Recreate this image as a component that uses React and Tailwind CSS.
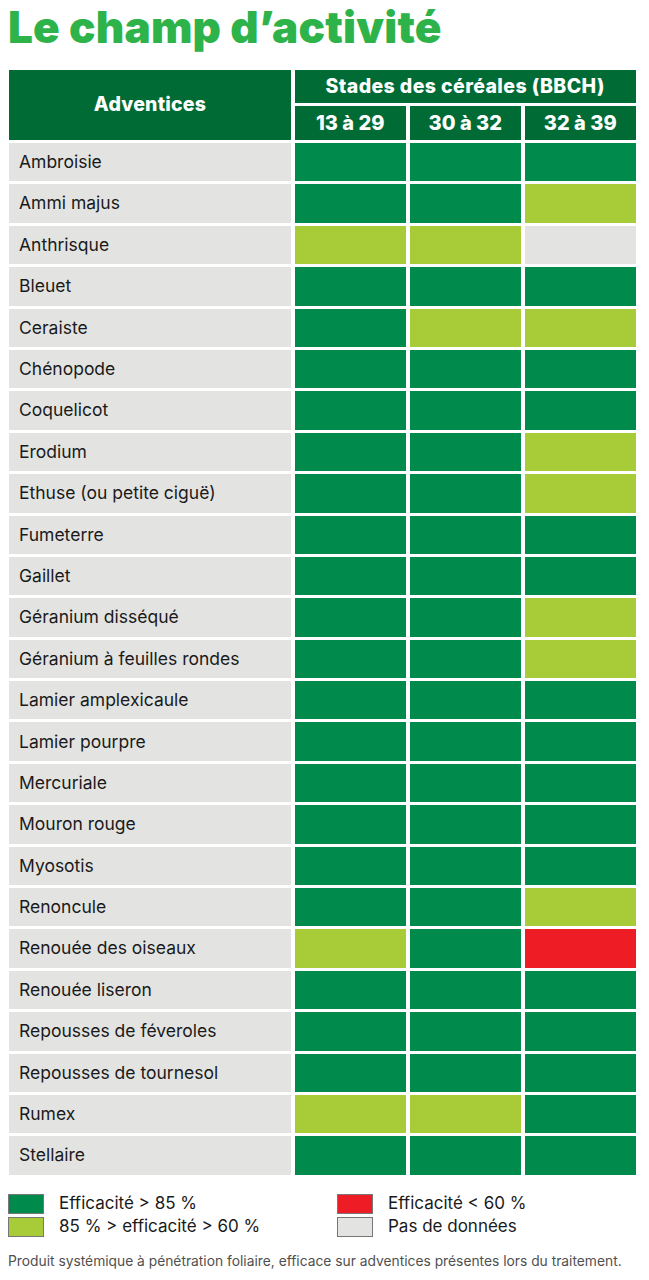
import React from "react";

const G = "bg-[#008b4d]";
const L = "bg-[#a8cb38]";
const R = "bg-[#ee1c25]";
const X = "bg-[#e3e4e2]";

const rows = [
  ["Ambroisie", G, G, G],
  ["Ammi majus", G, G, L],
  ["Anthrisque", L, L, X],
  ["Bleuet", G, G, G],
  ["Ceraiste", G, L, L],
  ["Chénopode", G, G, G],
  ["Coquelicot", G, G, G],
  ["Erodium", G, G, L],
  ["Ethuse (ou petite ciguë)", G, G, L],
  ["Fumeterre", G, G, G],
  ["Gaillet", G, G, G],
  ["Géranium disséqué", G, G, L],
  ["Géranium à feuilles rondes", G, G, L],
  ["Lamier amplexicaule", G, G, G],
  ["Lamier pourpre", G, G, G],
  ["Mercuriale", G, G, G],
  ["Mouron rouge", G, G, G],
  ["Myosotis", G, G, G],
  ["Renoncule", G, G, L],
  ["Renouée des oiseaux", L, G, R],
  ["Renouée liseron", G, G, G],
  ["Repousses de féveroles", G, G, G],
  ["Repousses de tournesol", G, G, G],
  ["Rumex", L, L, G],
  ["Stellaire", G, G, G],
];

function Legend({ color, label }) {
  return (
    <div className="flex items-center h-[20px]">
      <div className={`w-[36px] h-[20px] border border-[#777] ${color}`} />
      <span className="ml-[15px] text-[17px] leading-none text-[#1a1a1a]">{label}</span>
    </div>
  );
}

export default function App() {
  return (
    <div
      className="w-[649px] h-[1280px] bg-white overflow-hidden"
      style={{ fontFamily: "Inter, 'Noto Sans', sans-serif" }}
    >
      <h1 className="pl-[8px] pt-[5px] h-[70px] text-[44px] leading-none font-black text-[#2db34a] tracking-[0.2px]">
        Le champ d’activité
      </h1>

      <div className="ml-[9px] w-[627px] grid grid-cols-[282px_1fr_1fr_1fr] gap-x-[3.5px] gap-y-[3px]">
        <div className="row-span-2 bg-[#006b35] flex items-center justify-center text-white font-extrabold text-[19.5px] tracking-[0.2px]">
          Adventices
        </div>
        <div className="col-span-3 h-[33px] bg-[#006b35] flex items-center justify-center text-white font-extrabold text-[19.5px] tracking-[0.4px]">
          Stades des céréales (BBCH)
        </div>
        {["13 à 29", "30 à 32", "32 à 39"].map((s) => (
          <div
            key={s}
            className="h-[34px] bg-[#006b35] flex items-center justify-center text-white font-extrabold text-[20px]"
          >
            {s}
          </div>
        ))}
        {rows.map(([name, a, b, c]) => (
          <React.Fragment key={name}>
            <div className="h-[38.4px] bg-[#e3e4e2] flex items-center pl-[10px] text-[17.5px] text-[#1a1a1a]">
              {name}
            </div>
            <div className={`h-[38.4px] ${a}`} />
            <div className={`h-[38.4px] ${b}`} />
            <div className={`h-[38.4px] ${c}`} />
          </React.Fragment>
        ))}
      </div>

      <div className="mt-[19px] ml-[8px] grid grid-cols-[329px_1fr] gap-y-[3px]">
        <Legend color={G} label="Efficacité > 85 %" />
        <Legend color={R} label="Efficacité < 60 %" />
        <Legend color={L} label="85 % > efficacité > 60 %" />
        <Legend color={X} label="Pas de données" />
      </div>

      <p className="mt-[18px] ml-[8px] text-[13.8px] leading-none text-[#505050] whitespace-nowrap">
        Produit systémique à pénétration foliaire, efficace sur adventices présentes lors du traitement.
      </p>
    </div>
  );
}
